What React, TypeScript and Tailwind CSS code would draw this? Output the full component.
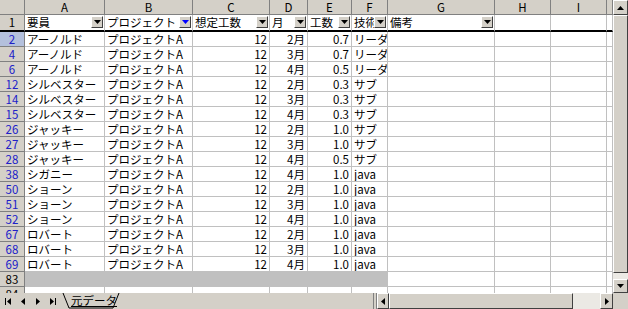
import React from "react";

const colW = [
  "w-[80px]",
  "w-[88px]",
  "w-[77px]",
  "w-[38px]",
  "w-[44px]",
  "w-[36px]",
  "w-[107px]",
  "w-[56px]",
  "w-[56px]",
  "w-[6px]",
];
const letters = ["A", "B", "C", "D", "E", "F", "G", "H", "I", ""];

type Row = [string, string, string, string, string, string, string];
const rows: Row[] = [
  ["2", "アーノルド", "プロジェクトA", "12", "2月", "0.7", "リーダ"],
  ["4", "アーノルド", "プロジェクトA", "12", "3月", "0.7", "リーダ"],
  ["6", "アーノルド", "プロジェクトA", "12", "4月", "0.5", "リーダ"],
  ["12", "シルベスター", "プロジェクトA", "12", "2月", "0.3", "サブ"],
  ["14", "シルベスター", "プロジェクトA", "12", "3月", "0.3", "サブ"],
  ["15", "シルベスター", "プロジェクトA", "12", "4月", "0.3", "サブ"],
  ["26", "ジャッキー", "プロジェクトA", "12", "2月", "1.0", "サブ"],
  ["27", "ジャッキー", "プロジェクトA", "12", "3月", "1.0", "サブ"],
  ["28", "ジャッキー", "プロジェクトA", "12", "4月", "0.5", "サブ"],
  ["38", "シガニー", "プロジェクトA", "12", "4月", "1.0", "java"],
  ["50", "ショーン", "プロジェクトA", "12", "2月", "1.0", "java"],
  ["51", "ショーン", "プロジェクトA", "12", "3月", "1.0", "java"],
  ["52", "ショーン", "プロジェクトA", "12", "4月", "1.0", "java"],
  ["67", "ロバート", "プロジェクトA", "12", "2月", "1.0", "java"],
  ["68", "ロバート", "プロジェクトA", "12", "3月", "1.0", "java"],
  ["69", "ロバート", "プロジェクトA", "12", "4月", "1.0", "java"],
];

const font = "font-['MS_PGothic','Noto_Sans_CJK_JP',sans-serif]";

function DropBtn({ blue = false }: { blue?: boolean }) {
  return (
    <div className="absolute right-[1px] top-[1px] w-[12px] h-[12px] bg-[#d4d0c8] border border-t-white border-l-white border-r-[#404040] border-b-[#404040] flex items-center justify-center">
      <svg width="7" height="4" viewBox="0 0 7 4">
        <polygon points="0,0 7,0 3.5,4" fill={blue ? "#0000ff" : "#000"} />
      </svg>
    </div>
  );
}

function Arrow({ dir }: { dir: "up" | "down" | "left" | "right" }) {
  const pts =
    dir === "up"
      ? "0,4 7,4 3.5,0"
      : dir === "down"
      ? "0,0 7,0 3.5,4"
      : dir === "left"
      ? "4,0 4,7 0,3.5"
      : "0,0 0,7 4,3.5";
  const w = dir === "up" || dir === "down" ? 7 : 4;
  const h = dir === "up" || dir === "down" ? 4 : 7;
  return (
    <svg width={w} height={h} viewBox={`0 0 ${w} ${h}`}>
      <polygon points={pts} fill="#000" />
    </svg>
  );
}

function ScrollBtn({ dir, cls }: { dir: "up" | "down" | "left" | "right"; cls: string }) {
  return (
    <div
      className={`${cls} bg-[#d4d0c8] border border-t-white border-l-white border-r-[#404040] border-b-[#404040] flex items-center justify-center shrink-0`}
    >
      <Arrow dir={dir} />
    </div>
  );
}

export default function App() {
  const headers = ["要員", "プロジェクト", "想定工数", "月", "工数", "技術", "備考"];
  return (
    <div className={`w-[628px] h-[309px] bg-white overflow-hidden text-[11.5px] leading-[13px] text-black ${font}`}>
      <div className="flex h-[293px]">
        <div className="w-[613px] h-[293px] overflow-hidden">
          {/* column header row */}
          <div className="flex h-[15px]">
            <div className="w-[25px] h-[15px] bg-[#d4d0c8] border-r border-b border-[#808080]" />
            {colW.map((w, i) => (
              <div
                key={i}
                className={`${w} h-[15px] bg-[#d4d0c8] border-r border-b border-[#808080] flex items-center justify-center shrink-0`}
              >
                {letters[i]}
              </div>
            ))}
          </div>
          {/* row 1 */}
          <div className="flex h-[17px]">
            <div className="w-[25px] h-[17px] bg-[#d4d0c8] border-r border-[#808080] border-b-2 border-b-black flex items-center justify-center shrink-0">
              1
            </div>
            {colW.map((w, i) => (
              <div
                key={i}
                className={`${w} h-[17px] relative border-r border-[#c0c0c0] border-b-2 border-b-black shrink-0 overflow-hidden flex items-center pl-[2px] whitespace-nowrap`}
              >
                {i < 7 ? headers[i] : ""}
                {i < 7 && <DropBtn blue={i === 1} />}
              </div>
            ))}
          </div>
          {/* data rows */}
          {rows.map((r, ri) => (
            <div key={ri} className="flex h-[15px]">
              <div
                className={`w-[25px] h-[15px] border-r border-b border-[#808080] flex items-center justify-center shrink-0 text-[#2020c8] ${
                  ri === 0 ? "bg-[#b4c0dc]" : "bg-[#d4d0c8]"
                }`}
              >
                {r[0]}
              </div>
              {colW.map((w, i) => {
                const v = i < 6 ? r[i + 1] : "";
                const right = i === 2 || i === 3 || i === 4;
                return (
                  <div
                    key={i}
                    className={`${w} h-[15px] border-r border-b border-[#c0c0c0] shrink-0 overflow-hidden whitespace-nowrap flex items-center ${
                      right ? "justify-end pr-[2px]" : "pl-[2px]"
                    }`}
                  >
                    {v}
                  </div>
                );
              })}
            </div>
          ))}
          {/* row 83 */}
          <div className="flex h-[15px]">
            <div className="w-[25px] h-[15px] bg-[#d4d0c8] border-r border-b border-[#808080] flex items-center justify-center shrink-0">
              83
            </div>
            {colW.map((w, i) => (
              <div
                key={i}
                className={`${w} h-[15px] border-b shrink-0 ${
                  i < 6 ? "bg-[#c0c0c0] border-[#c0c0c0]" : "border-r border-[#c0c0c0]"
                }`}
              />
            ))}
          </div>
          {/* row 84 */}
          <div className="flex h-[15px]">
            <div className="w-[25px] h-[15px] bg-[#d4d0c8] border-r border-b border-[#808080] flex items-center justify-center shrink-0">
              84
            </div>
            {colW.map((w, i) => (
              <div key={i} className={`${w} h-[15px] border-r border-b border-[#c0c0c0] shrink-0`} />
            ))}
          </div>
        </div>
        {/* vertical scrollbar */}
        <div className="w-[15px] h-[293px] flex flex-col bg-[#ebe9e4]">
          <ScrollBtn dir="up" cls="w-[15px] h-[15px]" />
          <div className="w-[15px] h-[258px] bg-[#d4d0c8] border border-t-white border-l-white border-r-[#404040] border-b-[#404040] shrink-0" />
          <div className="flex-1" />
          <ScrollBtn dir="down" cls="w-[15px] h-[14px]" />
        </div>
      </div>
      {/* bottom bar */}
      <div className="flex h-[16px] bg-[#d4d0c8] items-stretch">
        <div className="w-[62px] flex items-center">
          <div className="w-[15px] flex items-center justify-center gap-[1px]">
            <div className="w-[1px] h-[7px] bg-black" />
            <Arrow dir="left" />
          </div>
          <div className="w-[15px] flex items-center justify-center">
            <Arrow dir="left" />
          </div>
          <div className="w-[15px] flex items-center justify-center">
            <Arrow dir="right" />
          </div>
          <div className="w-[15px] flex items-center justify-center gap-[1px]">
            <Arrow dir="right" />
            <div className="w-[1px] h-[7px] bg-black" />
          </div>
        </div>
        <div className="relative w-[58px] h-[16px]">
          <svg width="58" height="16" className="absolute left-0 top-0">
            <polyline points="1,0 7,15 51,15 57,0" fill="none" stroke="#000" strokeWidth="1" />
          </svg>
          <div className="absolute left-[9px] top-[1px] leading-[13px] underline underline-offset-[1px]">元データ</div>
        </div>
        <div className="w-[253px]" />
        <div className="w-[4px] border-l border-r border-[#808080] bg-[#d4d0c8]" />
        <ScrollBtn dir="left" cls="w-[12px] h-[16px]" />
        <div className="w-[184px] h-[16px] bg-[#d4d0c8] border border-t-white border-l-white border-r-[#404040] border-b-[#404040]" />
        <div className="w-[27px] h-[16px] bg-[#ebe9e4]" />
        <ScrollBtn dir="right" cls="w-[13px] h-[16px]" />
        <div className="w-[15px] h-[16px] bg-[#d4d0c8]" />
      </div>
    </div>
  );
}
